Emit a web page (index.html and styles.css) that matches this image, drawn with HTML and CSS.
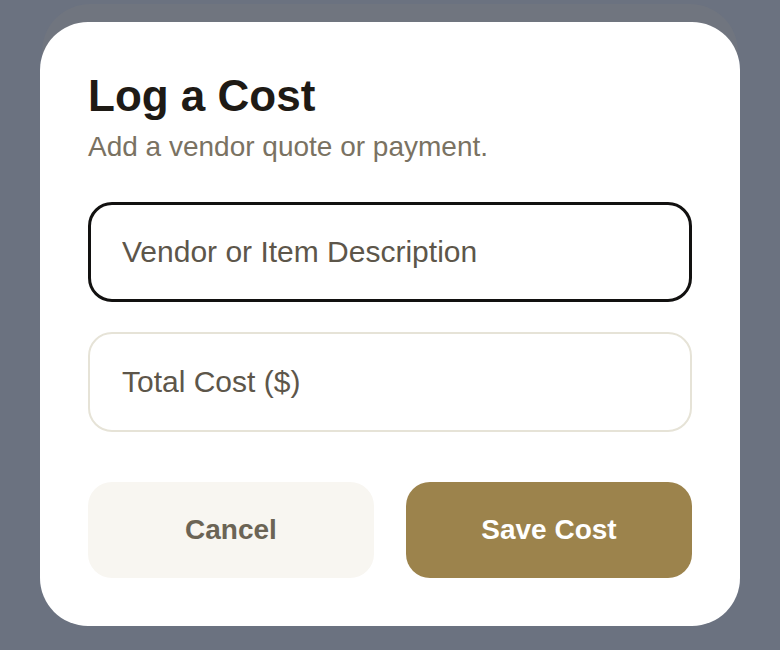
FILE: index.html
```html
<!DOCTYPE html>
<html lang="en">
<head>
  <meta charset="UTF-8">
  <meta name="viewport" content="width=device-width, initial-scale=1.0">
  <title>Log a Cost</title>
  <link rel="stylesheet" href="styles.css">
</head>
<body>
  <div class="backdrop"></div>
  <main class="overlay">
    <form class="modal" onsubmit="event.preventDefault()">
      <h1>Log a Cost</h1>
      <p class="subtitle">Add a vendor quote or payment.</p>
      <div class="fields">
        <input type="text" class="field focused" placeholder="Vendor or Item Description">
        <input type="text" class="field" placeholder="Total Cost ($)">
      </div>
      <div class="actions">
        <button type="button" class="btn btn-cancel">Cancel</button>
        <button type="submit" class="btn btn-save">Save Cost</button>
      </div>
    </form>
  </main>
</body>
</html>
```

FILE: styles.css
```css
html, body {
  height: 100%;
}
body {
  margin: 0;
  font-family: 'Liberation Sans', Arial, sans-serif;
  background-color: #6b7280;
  position: relative;
  overflow: hidden;
}
/* page behind the dimmed overlay */
.backdrop {
  position: absolute;
  top: 4px;
  left: 42px;
  right: 42px;
  bottom: 40px;
  border-radius: 48px;
  background-color: #70757f;
}
.overlay {
  position: relative;
  padding: 22px 40px 0;
}
.modal {
  background-color: #fff;
  border-radius: 48px;
  padding: 48px;
}
h1 {
  margin: 0 0 4px;
  font-size: 44px;
  line-height: 1.2;
  font-weight: bold;
  color: #1e1a15;
}
.subtitle {
  margin: 0;
  font-size: 28px;
  line-height: 1.4;
  color: #7a7262;
}
.fields {
  display: flex;
  flex-direction: column;
  gap: 30px;
  margin-top: 36px;
}
.field {
  box-sizing: border-box;
  height: 100px;
  width: 100%;
  padding: 0 32px;
  border: 2px solid #e6e3d7;
  border-radius: 24px;
  font-family: inherit;
  font-size: 30px;
  color: #1e1a15;
  background: #fff;
  outline: none;
}
.field.focused {
  border: 3px solid #121110;
  padding: 0 31px;
}
.field::placeholder {
  color: #5d564a;
}
.actions {
  display: flex;
  gap: 32px;
  margin-top: 50px;
}
.btn {
  flex: 1;
  height: 96px;
  border: none;
  border-radius: 24px;
  font-family: inherit;
  font-size: 28px;
  font-weight: bold;
  cursor: pointer;
}
.btn-cancel {
  background-color: #f8f6f1;
  color: #6b6455;
}
.btn-save {
  background-color: #9c834c;
  color: #fff;
}
```
